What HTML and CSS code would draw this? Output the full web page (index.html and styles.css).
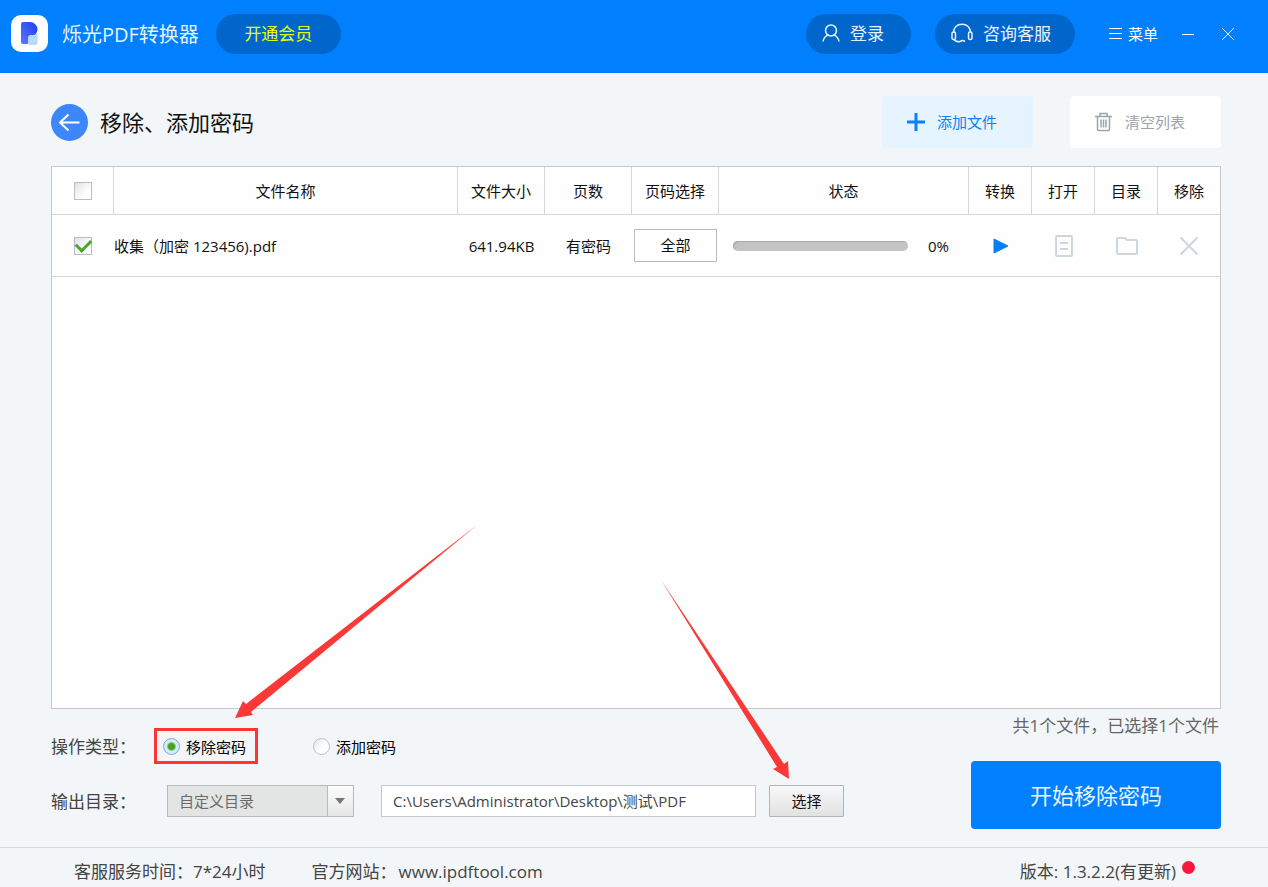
FILE: index.html
```html
<!DOCTYPE html>
<html lang="zh-CN">
<head>
    <meta charset="UTF-8">
    <meta name="viewport" content="width=device-width, initial-scale=1.0">
    <title>烁光PDF转换器</title>
    <link rel="stylesheet" href="styles.css">
</head>
<body>

<!-- Title bar -->
<header class="titlebar">
    <svg class="logo" viewBox="0 0 37 37" width="37" height="37" aria-hidden="true">
        <defs>
            <linearGradient id="logo-blue" x1="0" y1="1" x2="1" y2="0">
                <stop offset="0" stop-color="#5a7bfb"/>
                <stop offset="1" stop-color="#1f3cf0"/>
            </linearGradient>
        </defs>
        <rect width="37" height="37" rx="10" fill="#fff"/>
        <path d="M12 7h7a7.500 7.500 0 0 1 7.500 7.500v0a7.500 7.500 0 0 1-7.500 7.500h-1v5a2 2 0 0 1-2 2h-4a2 2 0 0 1-2-2V9a2 2 0 0 1 2-2z" fill="url(#logo-blue)"/>
        <path d="M17 23a3 3 0 0 1 3-3h1.500c2 0 3.500-.6 5-2v9.500a2.500 2.500 0 0 1-2.500 2.500h-5a2 2 0 0 1-2-2z" fill="#b9d8ff"/>
    </svg>
    <span class="app-name">烁光PDF转换器</span>
    <button type="button" class="pill vip">开通会员</button>

    <div class="titlebar-right">
        <button type="button" class="pill login">
            <svg viewBox="0 0 18 20" width="18" height="20" aria-hidden="true"><circle cx="9" cy="7.500" r="5.500"/><path d="M1 18.500c.5-3.500 2.400-5.300 5.200-6.600M17 18.500c-.5-3.500-2.400-5.300-5.200-6.600"/></svg>
            登录
        </button>
        <button type="button" class="pill service">
            <svg viewBox="0 0 22 20" width="22" height="20" aria-hidden="true"><path d="M2.500 9.500C2.500 4.500 6 1.200 11 1.200s8.500 3.300 8.500 8.300"/><rect x="1" y="9" width="3.500" height="7.500" rx="1.500"/><rect x="17.500" y="9" width="3.500" height="7.500" rx="1.500"/><path d="M3 16.500c1 1.600 2.800 2.200 6.500 2.200M9.500 19c0-2 4-2 4 0"/></svg>
            咨询客服
        </button>
        <button type="button" class="menu">
            <svg viewBox="0 0 13 13" width="13" height="13" aria-hidden="true"><path d="M0 1.500h13M0 6.500h13M0 11.500h13"/></svg>
            菜单
        </button>
        <button type="button" class="win-btn" aria-label="最小化">
            <svg viewBox="0 0 14 14" width="14" height="14" aria-hidden="true"><path d="M1 7.500h12"/></svg>
        </button>
        <button type="button" class="win-btn" aria-label="关闭">
            <svg viewBox="0 0 14 14" width="14" height="14" aria-hidden="true"><path d="M1 1l12 12M13 1L1 13"/></svg>
        </button>
    </div>
</header>

<main class="content">
    <!-- Page heading and list actions -->
    <div class="toolbar">
        <button type="button" class="back" aria-label="返回">
            <svg viewBox="0 0 37 37" width="37" height="37" aria-hidden="true"><path d="M9 18.500h19.500M17.500 10.500l-8.500 8 8.500 8"/></svg>
        </button>
        <h1>移除、添加密码</h1>
        <button type="button" class="tool add">
            <svg viewBox="0 0 20 20" width="20" height="20" aria-hidden="true"><path d="M10 1v18M1 10h18"/></svg>
            添加文件
        </button>
        <button type="button" class="tool clear">
            <svg viewBox="0 0 20 20" width="20" height="20" aria-hidden="true"><path d="M1 4.500h17M6 4V1.500h7V4M3.500 5v12.500a1 1 0 0 0 1 1h10a1 1 0 0 0 1-1V5M7 7.500v8M9.500 7.500v8M12 7.500v8"/></svg>
            清空列表
        </button>
    </div>

    <!-- File list -->
    <div class="file-panel">
        <table class="files">
            <colgroup>
                <col class="col-check"><col><col class="col-mid"><col class="col-mid"><col class="col-mid"><col class="col-status">
                <col class="col-icon"><col class="col-icon"><col class="col-icon"><col class="col-last">
            </colgroup>
            <thead>
                <tr>
                    <th><input type="checkbox" class="check" aria-label="全选"></th>
                    <th>文件名称</th>
                    <th>文件大小</th>
                    <th>页数</th>
                    <th>页码选择</th>
                    <th>状态</th>
                    <th>转换</th>
                    <th>打开</th>
                    <th>目录</th>
                    <th>移除</th>
                </tr>
            </thead>
            <tbody>
                <tr>
                    <td><input type="checkbox" class="check" id="file1" aria-label="选择文件" checked></td>
                    <td class="name"><label for="file1">收集（加密 123456).pdf</label></td>
                    <td>641.94KB</td>
                    <td>有密码</td>
                    <td><button type="button" class="range">全部</button></td>
                    <td>
                        <div class="status">
                            <progress value="0" max="100" aria-label="进度"></progress>
                            <span>0%</span>
                        </div>
                    </td>
                    <td>
                        <button type="button" class="icon play" aria-label="转换"><svg viewBox="0 0 24 24" width="24" height="24" aria-hidden="true"><path d="M5 5v14l14-7z"/></svg></button>
                    </td>
                    <td>
                        <button type="button" class="icon" aria-label="打开"><svg viewBox="0 0 24 24" width="24" height="24" aria-hidden="true"><rect x="4" y="2" width="16" height="20" rx="1"/><path d="M8 9h8M8 15h8"/></svg></button>
                    </td>
                    <td>
                        <button type="button" class="icon" aria-label="目录"><svg viewBox="0 0 24 24" width="24" height="24" aria-hidden="true"><path d="M3 4h7l2 2h9a1 1 0 0 1 1 1v12a1 1 0 0 1-1 1H3a1 1 0 0 1-1-1V5a1 1 0 0 1 1-1z"/></svg></button>
                    </td>
                    <td>
                        <button type="button" class="icon" aria-label="移除"><svg viewBox="0 0 24 24" width="24" height="24" aria-hidden="true"><path d="M3.500 3.500l17 17M20.500 3.500l-17 17"/></svg></button>
                    </td>
                </tr>
            </tbody>
        </table>
    </div>

    <!-- Options and start button -->
    <div class="bottom">
        <form class="options">
            <div class="row types">
                <span class="row-label">操作类型：</span>
                <label class="radio marked"><input type="radio" name="type" checked>移除密码</label>
                <label class="radio"><input type="radio" name="type">添加密码</label>
            </div>
            <div class="row">
                <label class="row-label" for="dir">输出目录：</label>
                <span class="dir-box">
                    <select id="dir" class="dir-select"><option>自定义目录</option></select>
                    <svg class="caret" viewBox="0 0 10 6" width="10" height="6" aria-hidden="true"><path d="M0 0h10L5 6z"/></svg>
                </span>
                <input type="text" class="path" aria-label="输出路径" value="C:\Users\Administrator\Desktop\测试\PDF">
                <button type="button" class="choose">选择</button>
            </div>
        </form>
        <div class="run">
            <p>共1个文件，已选择1个文件</p>
            <button type="button" class="start">开始移除密码</button>
        </div>

        <!-- Arrows pointing at the two controls -->
        <svg class="arrow arrow-type" viewBox="0 0 244 194" width="244" height="194" aria-hidden="true"><path d="M243 0L17 187 19 190 1 193 9 176 12 179z"/></svg>
        <svg class="arrow arrow-choose" viewBox="0 0 130 200" width="130" height="200" aria-hidden="true"><path d="M0 0L123 184 127 181 128 199 112 189 116 187z"/></svg>
    </div>
</main>

<footer class="footer">
    <span class="hours">客服服务时间：7*24小时</span>
    <span>官方网站：<a href="#">www.ipdftool.com</a></span>
    <span class="version">版本: 1.3.2.2(有更新)<i class="dot"></i></span>
</footer>

</body>
</html>
```

FILE: styles.css
```css
* {
    box-sizing: border-box;
}

body {
    margin: 0;
    min-height: 100vh;
    display: flex;
    flex-direction: column;
    font-family: "Open Sans", "Noto Sans CJK SC", sans-serif;
    font-size: 15px;
    color: #111;
    background: #f2f6f8;
}

button,
input,
select {
    font: inherit;
}

button {
    padding: 0;
    border: none;
    background: none;
    cursor: pointer;
}

svg {
    fill: none;
    stroke: currentColor;
    flex: none;
}

/* Title bar */
.titlebar {
    display: flex;
    align-items: center;
    height: 73px;
    padding: 0 33px 6px 11px;
    background: #0080ff;
    color: #fff;
}

.logo {
    stroke: none;
}

.app-name {
    margin: 0 17px 0 14px;
    font-size: 20px;
    color: #e6f3ff;
}

.pill {
    display: flex;
    align-items: center;
    height: 40px;
    padding-bottom: 2px;
    border-radius: 20px;
    background: #0066cc;
    color: #e6f3ff;
    font-size: 17px;
}

.pill svg {
    margin-right: 10px;
    stroke-width: 1.5;
}

.vip {
    justify-content: center;
    width: 125px;
    color: #e4fb12;
}

.titlebar-right {
    display: flex;
    align-items: center;
    margin-left: auto;
}

.login {
    width: 105px;
    margin-right: 24px;
    padding-left: 16px;
}

.service {
    width: 140px;
    margin-right: 34px;
    padding-left: 16px;
}

.menu {
    display: flex;
    align-items: center;
    gap: 6px;
    color: #fff;
}

.win-btn {
    display: flex;
    margin-left: 26px;
    color: #fff;
}

.menu + .win-btn {
    margin-left: 23px;
}

/* Main area */
.content {
    flex: 1;
    display: flex;
    flex-direction: column;
    padding: 23px 47px 0 51px;
}

.toolbar {
    display: flex;
    align-items: center;
    margin-bottom: 18px;
}

.back {
    display: flex;
    border-radius: 50%;
    background: #3d87fb;
    color: #fff;
}

.back svg {
    stroke-width: 2;
}

h1 {
    margin: 0 auto 0 12px;
    padding-bottom: 2px;
    font-size: 22px;
    font-weight: normal;
}

.tool {
    display: flex;
    align-items: center;
    gap: 11px;
    width: 151px;
    height: 52px;
    padding: 0 0 1px 24px;
    border-radius: 4px;
}

.add {
    margin-right: 37px;
    background: #e5f4fe;
    color: #0d80f8;
}

.add svg {
    stroke-width: 3;
}

.clear {
    background: #fff;
    color: #9aa4ab;
}

.clear svg {
    stroke-width: 1.5;
}

/* File list */
.file-panel {
    flex: 1;
    border: 1px solid #c5c9cc;
    background: #fefefe;
}

.files {
    width: 100%;
    table-layout: fixed;
    border-collapse: separate;
    border-spacing: 0;
}

.col-check {
    width: 62px;
}

.col-mid {
    width: 87px;
}

.col-status {
    width: 250px;
}

.col-icon {
    width: 63px;
}

.col-last {
    width: 62px;
}

th,
td {
    padding: 0;
    text-align: center;
    font-weight: normal;
    border-bottom: 1px solid #d4d7d9;
}

th {
    height: 48px;
    border-right: 1px solid #d4d7d9;
}

th:last-child {
    border-right: none;
}

td {
    height: 62px;
}

td.name {
    text-align: left;
}

.check {
    appearance: none;
    display: block;
    width: 18px;
    height: 18px;
    margin: 0 auto;
    border: 1px solid #b9bec2;
    background: linear-gradient(135deg, #dfe2e5, #fff 70%);
}

.check:checked {
    display: grid;
    place-items: center;
}

.check:checked::before {
    content: "";
    width: 12px;
    height: 7px;
    margin-bottom: 4px;
    border: solid #4ea62c;
    border-width: 0 0 3px 3px;
    transform: rotate(-45deg);
}

.range {
    width: 83px;
    height: 33px;
    padding-bottom: 2px;
    border: 1px solid #b9bcbe;
    background: #fff;
    color: #111;
    vertical-align: middle;
}

.status {
    display: flex;
    align-items: center;
    gap: 20px;
    padding-left: 14px;
}

progress {
    appearance: none;
    width: 175px;
    height: 10px;
    border: none;
}

progress::-webkit-progress-bar {
    border-radius: 5px;
    background: #c4c4c4;
    box-shadow: inset 1px 1px 1px #a5a5a5;
}

progress::-webkit-progress-value {
    border-radius: 5px;
    background: #0080ff;
}

.icon {
    color: #cfd7dd;
    vertical-align: middle;
}

.icon svg {
    display: block;
    stroke-width: 2;
}

.play svg {
    fill: #0080ff;
    stroke: #0080ff;
    stroke-width: 1;
    stroke-linejoin: round;
}

/* Options below the list */
.bottom {
    position: relative;
    display: flex;
    justify-content: space-between;
    height: 138px;
}

.options {
    padding-top: 19px;
}

.row {
    display: flex;
    align-items: center;
}

.types {
    margin-bottom: 21px;
}

.row-label {
    width: 103px;
    padding-bottom: 2px;
    font-size: 17px;
    color: #444;
}

.radio {
    display: flex;
    align-items: center;
    gap: 6px;
    height: 36px;
    margin-left: 55px;
    color: #000;
}

.radio.marked {
    margin-left: 0;
    padding: 0 9px 0 6px;
    border: 3px solid #fb3434;
}

.radio input {
    appearance: none;
    width: 17px;
    height: 17px;
    margin: 0;
    border: 1px solid #bcc1c4;
    border-radius: 50%;
    background: linear-gradient(135deg, #e2e5e7, #fff 60%);
}

.radio input:checked {
    border-color: #7aa7dc;
    background: radial-gradient(circle, #43a51f 3px, #d8e9fa 5px);
}

.dir-box {
    position: relative;
    width: 187px;
    margin: 0 27px 0 13px;
}

.dir-select {
    appearance: none;
    display: block;
    width: 100%;
    height: 32px;
    padding: 0 38px 0 11px;
    border: 1px solid #b6babc;
    border-radius: 0;
    color: #6b6b6b;
    background:
        linear-gradient(#b6babc, #b6babc) right 25px top / 1px 100% no-repeat,
        linear-gradient(#fcfcfc, #e6e6e6) right / 25px 100% no-repeat,
        #e3e4e4;
}

.caret {
    position: absolute;
    right: 9px;
    top: 13px;
    fill: #777;
    stroke: none;
    pointer-events: none;
}

.path {
    width: 375px;
    height: 32px;
    margin-right: 13px;
    padding: 0 11px 2px;
    border: 1px solid #c3c7ca;
    background: #fff;
    color: #444;
}

.choose {
    width: 75px;
    height: 32px;
    padding-bottom: 2px;
    border: 1px solid #b0b4b6;
    border-radius: 1px;
    background: linear-gradient(#f8f8f8, #e2e2e2);
    color: #111;
}

.run {
    width: 250px;
    text-align: right;
}

.run p {
    margin: 5px 2px 23px 0;
    font-size: 17px;
    line-height: 24px;
    white-space: nowrap;
    color: #666;
}

.start {
    width: 100%;
    height: 68px;
    padding-bottom: 2px;
    border-radius: 4px;
    background: #0080ff;
    color: #e9f4ff;
    font-size: 22px;
}

.arrow {
    position: absolute;
    fill: #fb3838;
    stroke: none;
    pointer-events: none;
}

.arrow-type {
    left: 183px;
    top: -184px;
}

.arrow-choose {
    left: 610px;
    top: -129px;
}

/* Footer */
.footer {
    display: flex;
    align-items: center;
    height: 40px;
    padding: 6px 73px 0 74px;
    border-top: 1px solid #d5dadd;
    font-size: 17px;
    color: #444;
}

.hours {
    margin-right: 46px;
}

.footer a {
    margin-left: 2px;
    color: inherit;
    text-decoration: none;
}

.version {
    display: flex;
    margin-left: auto;
}

.dot {
    width: 13px;
    height: 13px;
    margin: 3px 0 0 6px;
    border-radius: 50%;
    background: #fb1640;
}
```
